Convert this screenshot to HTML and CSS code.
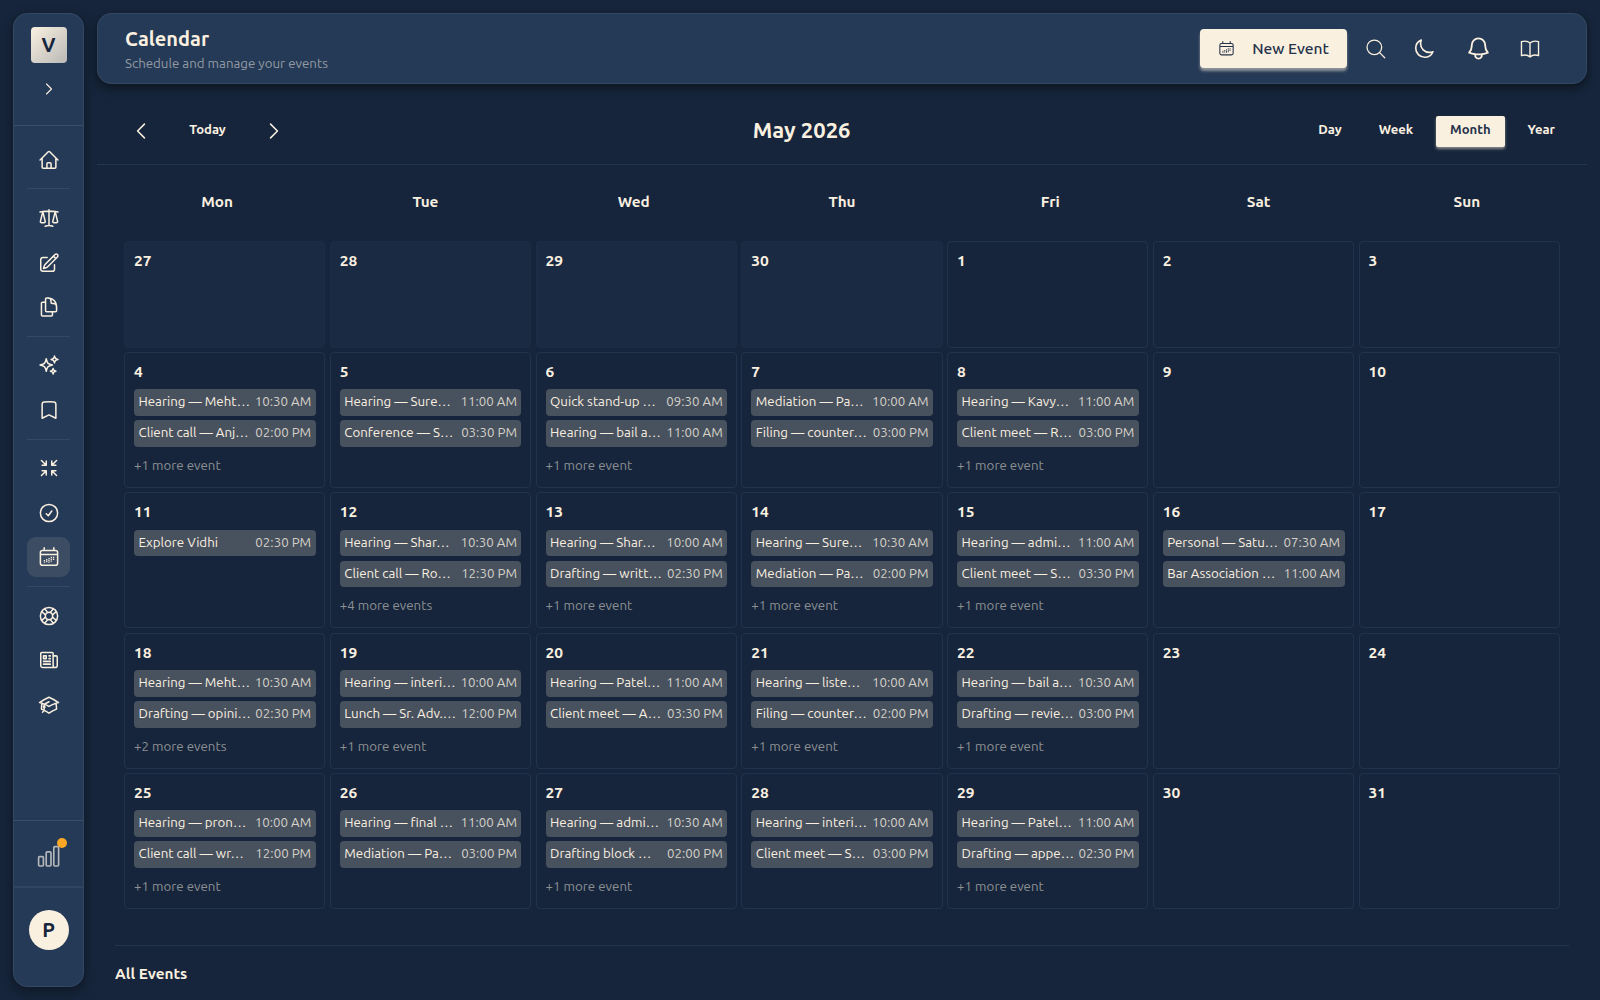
FILE: index.html
```html
<!DOCTYPE html>
<html lang="en">
<head>
  <meta charset="UTF-8" />
  <title>Calendar</title>
  <link rel="stylesheet" href="styles.css">
</head>
<body>

  <!-- Shared icon shapes -->
  <svg class="sprite">
    <symbol id="i-calendar" viewBox="0 0 24 24">
      <path d="M6.75 2v3M17.25 2v3M2.6 18.75V7.2A2.25 2.25 0 0 1 4.85 5h14.3a2.25 2.25 0 0 1 2.25 2.2v11.55A2.25 2.25 0 0 1 19.15 21H4.85a2.25 2.25 0 0 1-2.25-2.25ZM2.6 9.2h18.8" />
      <path class="dots" d="M7 15.2v3M9.5 14.2v4M12 13.2v5M14.5 11.8v5.4M17 11.8v3.6" />
    </symbol>
    <symbol id="i-left" viewBox="0 0 24 24"><path d="M15.75 19.5 8.25 12l7.5-7.5" /></symbol>
    <symbol id="i-right" viewBox="0 0 24 24"><path d="m8.25 4.5 7.5 7.5-7.5 7.5" /></symbol>
  </svg>

  <aside class="sidebar">
    <div class="sidebar-top">
      <div class="logo">V</div>
      <svg class="icon expand"><use href="#i-right" /></svg>
    </div>
    <nav class="nav">
      <a class="nav-item"><svg class="icon" viewBox="0 0 24 24"><path d="m2.25 12 8.954-8.955c.44-.439 1.152-.439 1.591 0L21.75 12M4.5 9.75v10.125c0 .621.504 1.125 1.125 1.125H9.75v-4.875c0-.621.504-1.125 1.125-1.125h2.25c.621 0 1.125.504 1.125 1.125V21h4.125c.621 0 1.125-.504 1.125-1.125V9.75M8.25 21h8.25" /></svg></a>
      <hr>
      <a class="nav-item"><svg class="icon" viewBox="0 0 24 24"><path d="M12 3v17.25m0 0c-1.472 0-2.882.265-4.185.75M12 20.25c1.472 0 2.882.265 4.185.75M18.75 4.97A48.416 48.416 0 0 0 12 4.5c-2.291 0-4.545.16-6.75.47m13.5 0c1.01.143 2.01.317 3 .52m-3-.52 2.62 10.726c.122.499-.106 1.028-.589 1.202a5.988 5.988 0 0 1-2.031.352 5.988 5.988 0 0 1-2.031-.352c-.483-.174-.711-.703-.59-1.202L18.75 4.971Zm-16.5.52c.99-.203 1.99-.377 3-.52m0 0 2.62 10.726c.122.499-.106 1.028-.589 1.202a5.989 5.989 0 0 1-2.031.352 5.989 5.989 0 0 1-2.031-.352c-.483-.174-.711-.703-.59-1.202L5.25 4.971Z" /></svg></a>
      <a class="nav-item"><svg class="icon" viewBox="0 0 24 24"><path d="m16.862 4.487 1.687-1.688a1.875 1.875 0 1 1 2.652 2.652L10.582 16.07a4.5 4.5 0 0 1-1.897 1.13L6 18l.8-2.685a4.5 4.5 0 0 1 1.13-1.897l8.932-8.931Zm0 0L19.5 7.125M18 14v4.75A2.25 2.25 0 0 1 15.75 21H5.25A2.25 2.25 0 0 1 3 18.75V8.25A2.25 2.25 0 0 1 5.25 6H10" /></svg></a>
      <a class="nav-item"><svg class="icon" viewBox="0 0 24 24"><path d="M15.75 17.25v3.375c0 .621-.504 1.125-1.125 1.125h-9.75a1.125 1.125 0 0 1-1.125-1.125V7.875c0-.621.504-1.125 1.125-1.125H6.75a9.06 9.06 0 0 1 1.5.124m7.5 10.376h3.375c.621 0 1.125-.504 1.125-1.125V11.25c0-4.46-3.243-8.161-7.5-8.876a9.06 9.06 0 0 0-1.5-.124H9.375c-.621 0-1.125.504-1.125 1.125v3.5m7.5 10.375H9.375a1.125 1.125 0 0 1-1.125-1.125v-9.25m12 6.625v-1.875a3.375 3.375 0 0 0-3.375-3.375h-1.5a1.125 1.125 0 0 1-1.125-1.125v-1.5a3.375 3.375 0 0 0-3.375-3.375H9.75" /></svg></a>
      <hr>
      <a class="nav-item"><svg class="icon" viewBox="0 0 24 24"><path d="M9.813 15.904 9 18.75l-.813-2.846a4.5 4.5 0 0 0-3.09-3.09L2.25 12l2.846-.813a4.5 4.5 0 0 0 3.09-3.09L9 5.25l.813 2.846a4.5 4.5 0 0 0 3.09 3.09L15.75 12l-2.846.813a4.5 4.5 0 0 0-3.09 3.09ZM18.259 8.715 18 9.75l-.259-1.035a3.375 3.375 0 0 0-2.455-2.456L14.25 6l1.036-.259a3.375 3.375 0 0 0 2.455-2.456L18 2.25l.259 1.035a3.375 3.375 0 0 0 2.456 2.456L21.75 6l-1.035.259a3.375 3.375 0 0 0-2.456 2.456ZM16.894 20.567 16.5 21.75l-.394-1.183a2.25 2.25 0 0 0-1.423-1.423L13.5 18.75l1.183-.394a2.25 2.25 0 0 0 1.423-1.423l.394-1.183.394 1.183a2.25 2.25 0 0 0 1.423 1.423l1.183.394-1.183.394a2.25 2.25 0 0 0-1.423 1.423Z" /></svg></a>
      <a class="nav-item"><svg class="icon" viewBox="0 0 24 24"><path d="M17.593 3.322c1.1.128 1.907 1.077 1.907 2.185V21L12 17.25 4.5 21V5.507c0-1.108.806-2.057 1.907-2.185a48.507 48.507 0 0 1 11.186 0Z" /></svg></a>
      <hr>
      <a class="nav-item"><svg class="icon" viewBox="0 0 24 24"><path d="M9 9V4.5M9 9H4.5M9 9 3.75 3.75M9 15v4.5M9 15H4.5M9 15l-5.25 5.25M15 9h4.5M15 9V4.5M15 9l5.25-5.25M15 15h4.5M15 15v4.5m0-4.5 5.25 5.25" /></svg></a>
      <a class="nav-item"><svg class="icon" viewBox="0 0 24 24"><path d="M9 12.75 11.25 15 15 9.75M21.4 12a9.4 9.4 0 1 1-18.8 0 9.4 9.4 0 0 1 18.8 0Z" /></svg></a>
      <a class="nav-item active"><svg class="icon"><use href="#i-calendar" /></svg></a>
      <hr>
      <a class="nav-item"><svg class="icon" viewBox="0 0 24 24"><circle cx="12" cy="12" r="9.4" /><circle cx="12" cy="12" r="4" /><path d="m16.7 4-3.4 4.3M20 7.3l-4.3 3.4M20 16.7l-4.3-3.4M16.7 20l-3.4-4.3M7.3 20l3.4-4.3M4 16.7l4.3-3.4M4 7.3l4.3 3.4M7.3 4l3.4 4.3" /></svg></a>
      <a class="nav-item"><svg class="icon" viewBox="0 0 24 24"><path d="M12 7.5h1.5m-1.5 3h1.5m-7.5 3h7.5m-7.5 3h7.5m3-9h3.375c.621 0 1.125.504 1.125 1.125V18a2.25 2.25 0 0 1-2.25 2.25M16.5 7.5V18a2.25 2.25 0 0 0 2.25 2.25M16.5 7.5V4.875c0-.621-.504-1.125-1.125-1.125H4.125C3.504 3.75 3 4.254 3 4.875V18a2.25 2.25 0 0 0 2.25 2.25h13.5M6 7.5h3v3H6v-3Z" /></svg></a>
      <a class="nav-item"><svg class="icon" viewBox="0 0 24 24"><path d="M4.26 10.147a60.438 60.438 0 0 0-.491 6.347A48.62 48.62 0 0 1 12 20.904a48.62 48.62 0 0 1 8.232-4.41 60.46 60.46 0 0 0-.491-6.347m-15.482 0a50.636 50.636 0 0 0-2.658-.813A59.906 59.906 0 0 1 12 3.493a59.903 59.903 0 0 1 10.399 5.84c-.896.248-1.783.52-2.658.814m-15.482 0A50.717 50.717 0 0 1 12 13.489a50.702 50.702 0 0 1 7.74-3.342M6.75 15a.75.75 0 1 0 0-1.5.75.75 0 0 0 0 1.5Zm0 0v-3.675A55.378 55.378 0 0 1 12 8.443m-7.007 11.55A5.981 5.981 0 0 0 6.75 15.75v-1.5" /></svg></a>
    </nav>
    <div class="usage">
      <svg class="icon" viewBox="0 0 24 24"><rect x="1.6" y="12.6" width="4.8" height="9.4" rx="1" /><rect x="9.2" y="7.8" width="4.8" height="14.2" rx="1" /><rect x="16.8" y="2.6" width="4.8" height="19.4" rx="1" /></svg>
      <span class="dot"></span>
    </div>
    <div class="account"><div class="avatar">P</div></div>
  </aside>

  <main class="main">
    <header class="header">
      <div class="heading">
        <h1>Calendar</h1>
        <p>Schedule and manage your events</p>
      </div>
      <button class="new-event"><svg class="icon"><use href="#i-calendar" /></svg><span>New Event</span></button>
      <div class="actions">
        <svg class="icon search" viewBox="0 0 24 24"><path d="m21.5 21.5-5.3-5.3" /><circle cx="10.2" cy="10.2" r="8" /></svg>
        <svg class="icon moon" viewBox="0 0 24 24"><path d="M21.752 15.002A9.72 9.72 0 0 1 18 15.75c-5.385 0-9.75-4.365-9.75-9.75 0-1.33.266-2.597.748-3.752A9.753 9.753 0 0 0 3 11.25C3 16.635 7.365 21 12.75 21a9.753 9.753 0 0 0 9.002-5.998Z" /></svg>
        <svg class="icon bell" viewBox="0 0 24 24"><path d="M14.857 17.082a23.848 23.848 0 0 0 5.454-1.31A8.967 8.967 0 0 1 18 9.75V9A6 6 0 0 0 6 9v.75a8.967 8.967 0 0 1-2.312 6.022c1.733.64 3.56 1.085 5.455 1.31m5.714 0a24.255 24.255 0 0 1-5.714 0m5.714 0a3 3 0 1 1-5.714 0" /></svg>
        <svg class="icon book" viewBox="0 0 24 24"><path d="M12 5.4C10.600 4.200 8.500 3.400 6.500 3.400c-1.200 0-2.500.2-3.800.5v15.200c1.300-.3 2.600-.5 3.800-.5 2.200 0 4.200.8 5.500 2 1.300-1.200 3.300-2 5.500-2 1.200 0 2.500.2 3.800.5V3.900c-1.300-.3-2.600-.5-3.800-.5-2 0-4.100.8-5.500 2Zm0 0v15.200" /></svg>
      </div>
    </header>

    <div class="toolbar">
      <div class="pager">
        <svg class="icon"><use href="#i-left" /></svg>
        <button>Today</button>
        <svg class="icon"><use href="#i-right" /></svg>
      </div>
      <h2>May 2026</h2>
      <div class="views">
        <button>Day</button>
        <button>Week</button>
        <button class="selected">Month</button>
        <button>Year</button>
      </div>
    </div>

    <div class="weekdays">
      <span>Mon</span><span>Tue</span><span>Wed</span><span>Thu</span><span>Fri</span><span>Sat</span><span>Sun</span>
    </div>
    <div class="grid" id="grid"></div>

    <section class="all-events">
      <h3>All Events</h3>
    </section>
  </main>

  <script>
    const grid = document.getElementById("grid");

    // day: [[title, time], [title, time], hidden events]
    const events = {
      4: [["Hearing — Meht…", "10:30 AM"], ["Client call — Anj…", "02:00 PM"], 1],
      5: [["Hearing — Sure…", "11:00 AM"], ["Conference — S…", "03:30 PM"]],
      6: [["Quick stand-up …", "09:30 AM"], ["Hearing — bail a…", "11:00 AM"], 1],
      7: [["Mediation — Pa…", "10:00 AM"], ["Filing — counter…", "03:00 PM"]],
      8: [["Hearing — Kavy…", "11:00 AM"], ["Client meet — R…", "03:00 PM"], 1],
      11: [["Explore Vidhi", "02:30 PM"]],
      12: [["Hearing — Shar…", "10:30 AM"], ["Client call — Ro…", "12:30 PM"], 4],
      13: [["Hearing — Shar…", "10:00 AM"], ["Drafting — writt…", "02:30 PM"], 1],
      14: [["Hearing — Sure…", "10:30 AM"], ["Mediation — Pa…", "02:00 PM"], 1],
      15: [["Hearing — admi…", "11:00 AM"], ["Client meet — S…", "03:30 PM"], 1],
      16: [["Personal — Satu…", "07:30 AM"], ["Bar Association …", "11:00 AM"]],
      18: [["Hearing — Meht…", "10:30 AM"], ["Drafting — opini…", "02:30 PM"], 2],
      19: [["Hearing — interi…", "10:00 AM"], ["Lunch — Sr. Adv.…", "12:00 PM"], 1],
      20: [["Hearing — Patel…", "11:00 AM"], ["Client meet — A…", "03:30 PM"]],
      21: [["Hearing — liste…", "10:00 AM"], ["Filing — counter…", "02:00 PM"], 1],
      22: [["Hearing — bail a…", "10:30 AM"], ["Drafting — revie…", "03:00 PM"], 1],
      25: [["Hearing — pron…", "10:00 AM"], ["Client call — wr…", "12:00 PM"], 1],
      26: [["Hearing — final …", "11:00 AM"], ["Mediation — Pa…", "03:00 PM"]],
      27: [["Hearing — admi…", "10:30 AM"], ["Drafting block …", "02:00 PM"], 1],
      28: [["Hearing — interi…", "10:00 AM"], ["Client meet — S…", "03:00 PM"]],
      29: [["Hearing — Patel…", "11:00 AM"], ["Drafting — appe…", "02:30 PM"], 1]
    };

    function addDay(day, outside) {
      const cell = document.createElement("div");
      cell.className = outside ? "day outside" : "day";
      let html = `<b class="number">${day}</b>`;
      if (!outside && events[day]) {
        events[day].forEach(e => {
          if (Array.isArray(e)) {
            html += `<div class="event"><span>${e[0]}</span><time>${e[1]}</time></div>`;
          } else {
            html += `<div class="more">+${e} more event${e > 1 ? "s" : ""}</div>`;
          }
        });
      }
      cell.innerHTML = html;
      grid.appendChild(cell);
    }

    for (let d = 27; d <= 30; d++) addDay(d, true);
    for (let d = 1; d <= 31; d++) addDay(d, false);
  </script>
</body>
</html>
```
FILE: styles.css
```css
* { box-sizing: border-box; }
body {
  margin: 0;
  height: 1000px;
  padding: 13px;
  display: flex;
  gap: 13px;
  overflow: hidden;
  font-family: Ubuntu, "Noto Sans", sans-serif;
  background-color: #16253b;
  color: #faf0e0;
}
h1, h2, h3, p { margin: 0; }
button {
  border: none;
  background: none;
  color: inherit;
  font-family: inherit;
  padding: 0;
}
.sprite {
  display: none;
}
.icon {
  width: 22px;
  height: 22px;
  flex: none;
  fill: none;
  stroke: currentColor;
  stroke-width: 1.65;
  stroke-linecap: round;
  stroke-linejoin: round;
}
.dots {
  stroke-width: 1.4;
  stroke-linecap: butt;
  stroke-dasharray: 1.5 0.5;
}

/* Sidebar */
.sidebar {
  width: 71px;
  height: 974px;
  flex: none;
  display: flex;
  flex-direction: column;
  background-color: #253a56;
  border: 1px solid #344862;
  border-radius: 14px;
  box-shadow: 0 4px 12px rgba(0, 0, 0, 0.4);
}
.sidebar-top {
  height: 112px;
  padding-top: 13px;
  display: flex;
  flex-direction: column;
  align-items: center;
  border-bottom: 1px solid #3a4e68;
}
.logo {
  width: 36px;
  height: 36px;
  border-radius: 4px;
  background: linear-gradient(135deg, #faf0e0, #b9b9b6);
  color: #16253b;
  font-size: 20px;
  font-weight: 700;
  line-height: 36px;
  text-align: center;
}
.expand {
  width: 16px;
  height: 16px;
  margin-top: 18px;
}
.nav {
  flex: 1;
  padding: 13.8px 13px 0;
  display: flex;
  flex-direction: column;
  gap: 4.6px;
}
.nav-item {
  height: 40px;
  display: flex;
  align-items: center;
  justify-content: center;
  border-radius: 9px;
}
.nav-item.active {
  background-color: #3c4c63;
}
.nav hr {
  width: 100%;
  height: 1px;
  margin: 4px 0;
  border: none;
  background-color: #354965;
}
.usage {
  position: relative;
  height: 66px;
  padding-top: 5px;
  display: flex;
  align-items: center;
  justify-content: center;
  border-top: 1px solid #3a4e68;
}
.usage .icon {
  width: 24px;
  height: 24px;
  color: #b5b8ba;
}
.dot {
  position: absolute;
  top: 17px;
  right: 16px;
  width: 10px;
  height: 10px;
  border-radius: 50%;
  background-color: #f9a826;
}
.account {
  height: 100px;
  padding-top: 22px;
  border-top: 2px solid #314560;
}
.avatar {
  width: 40px;
  height: 40px;
  margin: 0 auto;
  border-radius: 50%;
  background-color: #faf0e0;
  color: #16253b;
  font-size: 20px;
  font-weight: 700;
  line-height: 40px;
  text-align: center;
}

/* Header */
.main {
  width: 1490px;
}
.header {
  height: 71px;
  padding: 0 45px 0 27px;
  display: flex;
  align-items: center;
  background-color: #253a56;
  border: 1px solid #344862;
  border-radius: 14px;
  box-shadow: 0 4px 10px rgba(0, 0, 0, 0.45);
}
.heading {
  flex: 1;
  padding-top: 3px;
}
.heading h1 {
  font-size: 20px;
  font-weight: 700;
  line-height: 26px;
}
.heading p {
  font-size: 13.3px;
  line-height: 23px;
  color: #939aa3;
}
.new-event {
  width: 147px;
  height: 39px;
  margin-right: 18px;
  padding-bottom: 1px;
  display: flex;
  align-items: center;
  justify-content: center;
  gap: 17px;
  border-radius: 4px;
  background-color: #faf0e0;
  box-shadow: 0 3px 3px rgba(250, 240, 224, 0.5);
  color: #26334a;
  font-size: 15.6px;
  font-weight: 500;
}
.new-event .icon {
  width: 17px;
  height: 17px;
  stroke-width: 1.5;
}
.actions {
  display: flex;
  align-items: center;
}
.search {
  margin-right: 26px;
  stroke-width: 1.4;
}
.moon {
  margin-right: 30px;
  stroke-width: 1.8;
}
.bell {
  width: 27px;
  height: 27px;
  margin-right: 27px;
}
.book {
  stroke-width: 1.5;
  stroke-linejoin: miter;
}

/* Month toolbar */
.toolbar {
  height: 81px;
  padding: 14px 18px 0 33px;
  display: flex;
  align-items: center;
  justify-content: space-between;
  border-bottom: 1px solid #24364f;
}
.toolbar button {
  height: 31px;
  padding: 0 14px 4px;
  font-size: 13.1px;
  font-weight: 700;
  line-height: 23px;
}
.pager {
  width: 169px;
  display: flex;
  align-items: center;
}
.pager button {
  width: 111px;
}
.toolbar h2 {
  padding-bottom: 3px;
  font-size: 22px;
  font-weight: 700;
}
.views {
  display: flex;
  gap: 9px;
}
.toolbar .selected {
  background-color: #faf0e0;
  color: #26334a;
  border-radius: 2px;
  box-shadow: 0 2px 3px rgba(250, 240, 224, 0.5);
}

/* Month grid */
.weekdays {
  height: 76px;
  padding: 0 16px 4px;
  display: grid;
  grid-template-columns: repeat(7, 1fr);
  align-items: center;
  text-align: center;
  font-size: 15.3px;
  font-weight: 700;
}
.grid {
  padding: 0 27px;
  display: grid;
  grid-template-columns: repeat(7, minmax(0, 1fr));
  grid-template-rows: 106.5px repeat(4, 136px);
  gap: 4.4px;
}
.day {
  padding: 9px 8.7px 9px 9px;
  border: 1px solid #21334c;
  border-radius: 4px;
}
.day.outside {
  background-color: #1a2a42;
  border-color: #1c2c45;
}
.number {
  display: block;
  height: 27.4px;
  font-size: 15.5px;
  font-weight: 700;
  line-height: 19.6px;
}
.event {
  height: 26.6px;
  margin-bottom: 4.4px;
  padding: 0 4.5px;
  display: flex;
  justify-content: space-between;
  border-radius: 4px;
  background-color: #48515e;
  font-size: 13.3px;
  line-height: 25px;
  white-space: nowrap;
}
.event time {
  color: #d5d1c9;
}
.more {
  padding-top: 5.5px;
  font-size: 13.3px;
  line-height: 18px;
  color: #8c9093;
}

.all-events {
  margin: 36px 18px 0;
  border-top: 1px solid #24364f;
}
.all-events h3 {
  font-size: 15.3px;
  font-weight: 700;
  line-height: 56px;
}
```
